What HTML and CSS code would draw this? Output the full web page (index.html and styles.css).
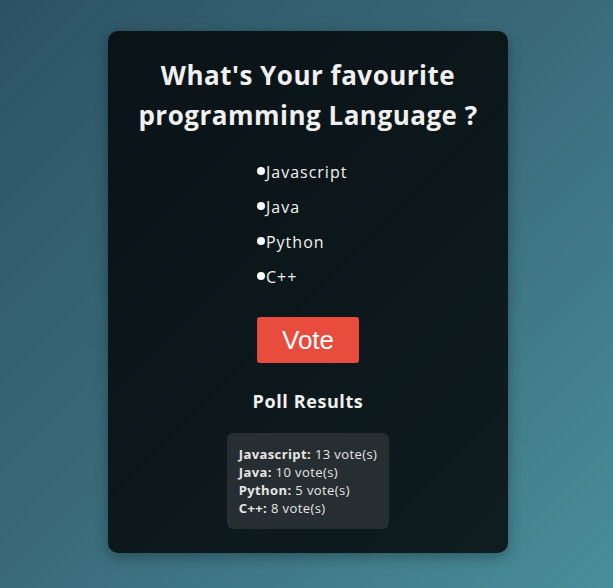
FILE: index.html
```html
<!DOCTYPE html>
<html lang="en">
<head>
<meta charset="UTF-8">
<title>Poll</title>
<link rel="stylesheet" href="styles.css">
</head>
<body>
  <div class="card">
    <h2 class="title">What's Your favourite programming Language ?</h2>
    <form class="poll-form">
      <label class="option"><input type="radio" name="lang" class="radio">Javascript</label>
      <label class="option"><input type="radio" name="lang" class="radio">Java</label>
      <label class="option"><input type="radio" name="lang" class="radio">Python</label>
      <label class="option"><input type="radio" name="lang" class="radio">C++</label>
      <button type="button" class="vote-btn">Vote</button>
    </form>
    <h3 class="results-title">Poll Results</h3>
    <div class="results">
      <div><strong>Javascript:</strong> 13 vote(s)</div>
      <div><strong>Java:</strong> 10 vote(s)</div>
      <div><strong>Python:</strong> 5 vote(s)</div>
      <div><strong>C++:</strong> 8 vote(s)</div>
    </div>
  </div>
</body>
</html>
```
FILE: styles.css
```css
html {
  min-height: 100%;
  background: linear-gradient(135deg, #2c5364 0%, #3a6b7b 50%, #488e9a 100%);
}
body {
  margin: 0;
  min-height: 100vh;
  display: flex;
  justify-content: center;
  align-items: flex-start;
  padding: 31px 0 0 3px;
  box-sizing: border-box;
  font-family: "Open Sans", "DejaVu Sans", sans-serif;
  color: #eeeeee;
}
.card {
  width: 400px;
  box-sizing: border-box;
  background: rgba(0, 0, 0, 0.78);
  border-radius: 10px;
  box-shadow: 0 4px 14px rgba(0, 0, 0, 0.3);
  padding: 24px 20px 24px;
  display: flex;
  flex-direction: column;
  align-items: center;
}
.title {
  margin: 0;
  font-size: 26px;
  letter-spacing: 0.5px;
  line-height: 40px;
  font-weight: 700;
  text-align: center;
  color: #f0f0f0;
}
.poll-form {
  margin-top: 25px;
  display: flex;
  flex-direction: column;
  align-items: flex-start;
  gap: 11px;
}
.option {
  display: flex;
  align-items: center;
  font-size: 16px;
  letter-spacing: 1px;
  line-height: 24px;
  color: #f2f2f2;
}
.radio {
  appearance: none;
  -webkit-appearance: none;
  margin: 0 1px -1px 0;
  width: 8px;
  height: 8px;
  border-radius: 50%;
  background: #ffffff;
  position: relative;
  top: -2px;
}
.vote-btn {
  margin-top: 17px;
  background: #e74c3c;
  color: #ffffff;
  border: none;
  border-radius: 3px;
  font-family: "Liberation Sans", Arial, sans-serif;
  font-size: 26px;
  line-height: 30px;
  padding: 8px 25px;
}
.results-title {
  margin: 25px 0 0;
  font-size: 18px;
  letter-spacing: 0.6px;
  line-height: 27px;
  font-weight: 700;
  color: #f0f0f0;
}
.results {
  margin-top: 18px;
  background: #262e31;
  border-radius: 6px;
  padding: 12px;
  font-size: 13px;
  letter-spacing: 0.4px;
  line-height: 18px;
  color: #e6e6e6;
}
.results strong {
  font-weight: 700;
}
```
